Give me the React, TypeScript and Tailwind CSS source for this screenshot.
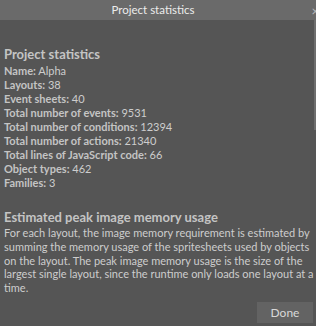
import React from "react";

const rows: [string, string][] = [
  ["Name:", "Alpha"],
  ["Layouts:", "38"],
  ["Event sheets:", "40"],
  ["Total number of events:", "9531"],
  ["Total number of conditions:", "12394"],
  ["Total number of actions:", "21340"],
  ["Total lines of JavaScript code:", "66"],
  ["Object types:", "462"],
  ["Families:", "3"],
];

export default function App() {
  return (
    <div
      className="w-[316px] h-[326px] bg-[#555555] flex flex-col overflow-hidden text-[#cdcdcd]"
      style={{ fontFamily: 'Lato, sans-serif' }}
    >
      <div className="h-[20px] shrink-0 bg-[#6a6a6a] relative flex items-center justify-center pr-[10px] text-[11.5px] text-[#ececec]">
        Project statistics
        <span className="absolute right-[-3px] top-[2px] text-[13px] text-[#bbbbbb]">×</span>
      </div>
      <div className="flex-1 relative flex flex-col pl-[4px] pr-[2px]">
        <div className="absolute right-0 top-0 w-[2px] h-[110px] bg-[#6e6e6e]" />
        <div className="mt-[25px] text-[13px] font-bold leading-[18px] text-[#c4c4c4]">Project statistics</div>
        <div className="mt-[1px] flex flex-col text-[11px] leading-[14px]">
          {rows.map(([k, v]) => (
            <div key={k}>
              <span className="font-bold text-[#c4c4c4]">{k}</span> <span>{v}</span>
            </div>
          ))}
        </div>
        <div className="mt-[18px] text-[13px] font-bold leading-[18px] text-[#c4c4c4]">Estimated peak image memory usage</div>
        <div className="mt-[0px] text-[11px] leading-[13.8px]">
          For each layout, the image memory requirement is estimated by summing the memory usage of the spritesheets used by objects on the layout. The peak image memory usage is the size of the largest single layout, since the runtime only loads one layout at a time.
        </div>
        <div className="flex justify-end mt-auto mb-[3px]">
          <button className="w-[56px] h-[21px] bg-[#636363] text-[12px] text-[#d8d8d8] mr-[1px]">Done</button>
        </div>
      </div>
    </div>
  );
}
